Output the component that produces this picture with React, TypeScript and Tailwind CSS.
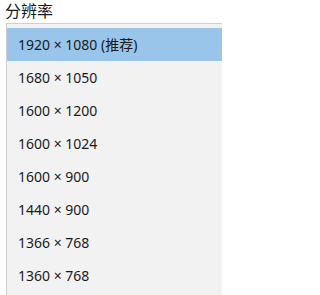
const resolutions = [
  '1920 × 1080 (推荐)',
  '1680 × 1050',
  '1600 × 1200',
  '1600 × 1024',
  '1600 × 900',
  '1440 × 900',
  '1366 × 768',
  '1360 × 768',
]

export default function App() {
  return (
    <div
      className="w-[222px] h-[295px] overflow-hidden bg-white text-[#1a1a1a]"
      style={{ fontFamily: '"Noto Sans", "Noto Sans CJK SC", sans-serif' }}
    >
      <div className="pl-[5px] pt-[1px] h-[23px] text-[16px] leading-[20px]">分辨率</div>
      <div className="ml-[6px] h-[272px] bg-[#f2f2f2] border-l border-t border-[#cfcfcf] pt-[4px]">
        {resolutions.map((r, i) => (
          <div
            key={r}
            className={`h-[33px] flex items-center pl-[11px] text-[14px] ${i === 0 ? 'bg-[#99c5ea]' : ''}`}
          >
            {r}
          </div>
        ))}
      </div>
    </div>
  )
}
